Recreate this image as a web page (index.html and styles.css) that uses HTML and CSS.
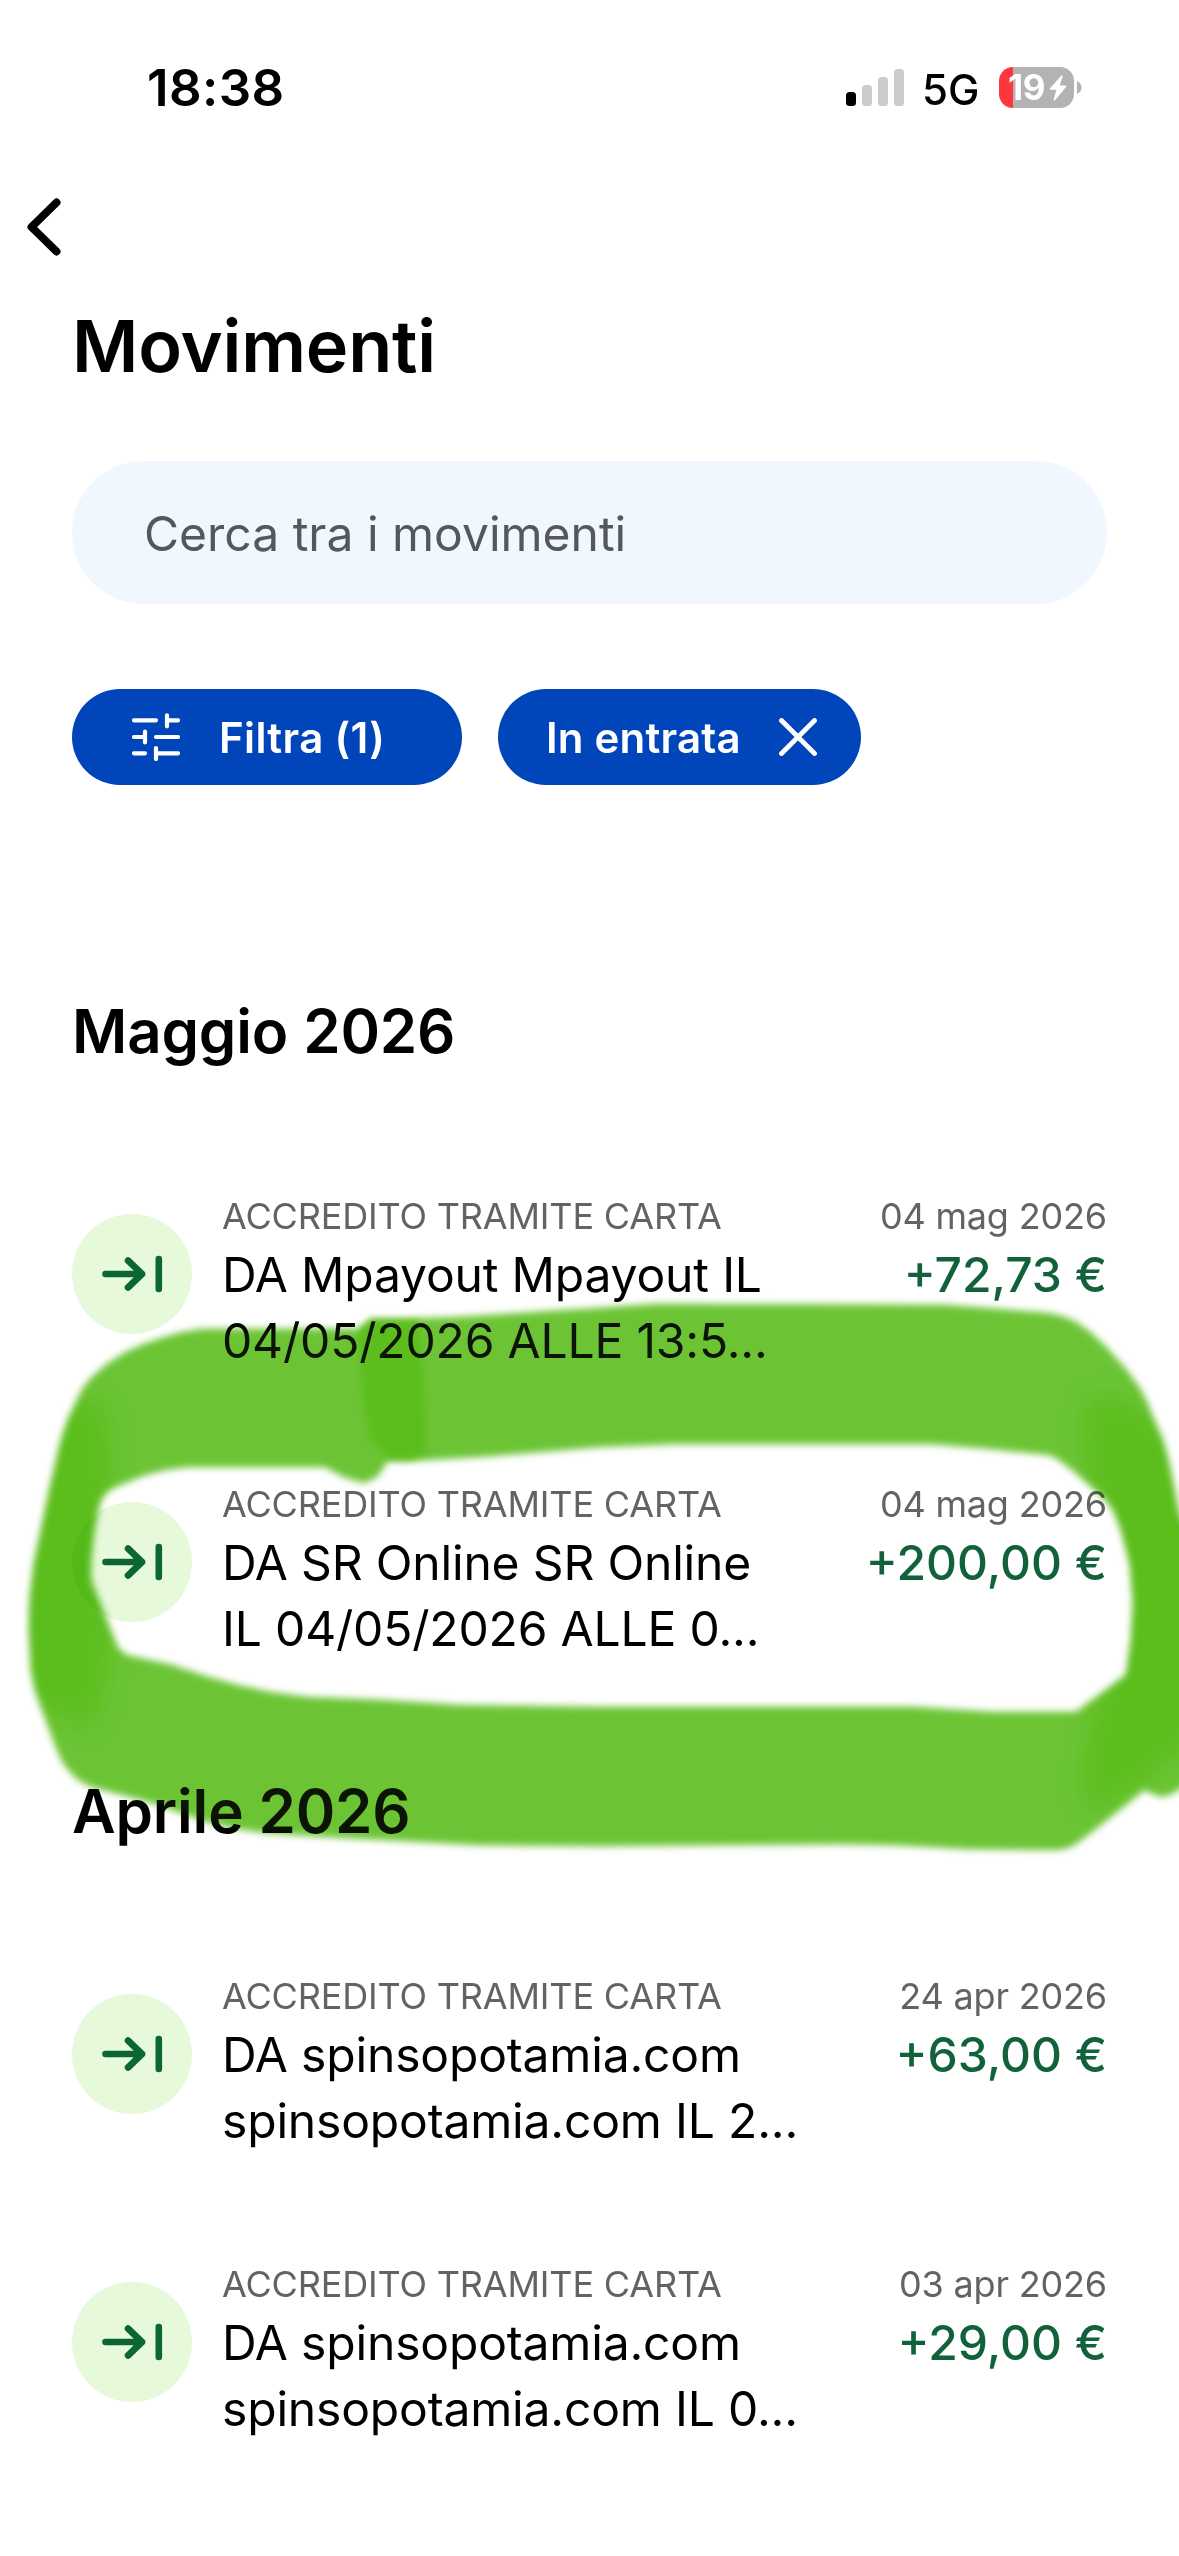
FILE: index.html
```html
<!DOCTYPE html>
<html lang="it">
<head>
<meta charset="utf-8">
<title>Movimenti</title>
<link rel="stylesheet" href="styles.css">
</head>
<body>
<svg class="defs" aria-hidden="true">
  <symbol id="incoming" viewBox="0 0 120 120">
    <path d="M33.5 60H70M56 46.5L70 60L56 73.5M86.8 45V75" fill="none" stroke="#0b6535" stroke-width="6.6" stroke-linecap="round" stroke-linejoin="round"/>
  </symbol>
</svg>
<div class="screen">
  <header class="status">
    <span class="time">18:38</span>
    <div class="status-right">
      <svg class="signal" viewBox="0 0 58 37">
        <rect x="0" y="23" width="10" height="14" rx="3.5" fill="#000"/>
        <rect x="16" y="16" width="10" height="21" rx="3.5" fill="#cbcbcb"/>
        <rect x="32" y="8" width="10" height="29" rx="3.5" fill="#cbcbcb"/>
        <rect x="48" y="0" width="10" height="37" rx="3.5" fill="#cbcbcb"/>
      </svg>
      <span class="network">5G</span>
      <div class="battery">
        <div class="battery-body">
          <span class="battery-level">19</span>
          <svg class="bolt" viewBox="0 0 18 26"><path d="M12.5 0.5L0.8 13.6Q0.3 14.6 1.4 14.7H7.4L4.6 24.6Q4.8 26 6 25.2L17.2 11.8Q17.7 10.7 16.6 10.6H10.8L13.6 1.4Q13.5 0 12.5 0.5Z" fill="#fff"/></svg>
        </div>
        <svg class="battery-cap" viewBox="0 0 5 13"><path d="M0 0Q4.5 2 4.5 6.5Q4.5 11 0 13Z" fill="#b3b3b3"/></svg>
      </div>
    </div>
  </header>
  <nav class="nav">
    <svg class="back" viewBox="0 0 34 58"><path d="M29.5 4.5L4.5 29L29.5 53.5" fill="none" stroke="#000" stroke-width="8" stroke-linecap="round" stroke-linejoin="round"/></svg>
  </nav>
  <main class="content">
    <h1 class="title">Movimenti</h1>
    <div class="search">Cerca tra i movimenti</div>
    <div class="chips">
      <button class="chip chip-filter">
        <svg class="tune" viewBox="0 0 48 48"><path d="M2 7.300H24M35 2.300V13.300M35 7.300H46M2 24H13M13 18.500V29.500M24 24H46M2 40.300H13M24 35V46M24 40.300H46" fill="none" stroke="#fff" stroke-width="4.200" stroke-linecap="round"/></svg>
        <span>Filtra (1)</span>
      </button>
      <button class="chip chip-active">
        <span>In entrata</span>
        <svg class="close" viewBox="0 0 38 38"><path d="M2.500 2.500L35.500 35.500M35.500 2.500L2.500 35.500" fill="none" stroke="#fff" stroke-width="4.800" stroke-linecap="round"/></svg>
      </button>
    </div>

    <h2 class="month">Maggio 2026</h2>
    <div class="list">
      <article class="row">
        <svg class="badge"><use href="#incoming"/></svg>
        <div class="info"><div class="kind">ACCREDITO TRAMITE CARTA</div><div class="desc">DA Mpayout Mpayout IL<br>04/05/2026 ALLE 13:5...</div></div>
        <div class="sum"><div class="date">04 mag 2026</div><div class="amount">+72,73 €</div></div>
      </article>
      <article class="row">
        <svg class="badge"><use href="#incoming"/></svg>
        <div class="info"><div class="kind">ACCREDITO TRAMITE CARTA</div><div class="desc">DA SR Online SR Online<br>IL 04/05/2026 ALLE 0...</div></div>
        <div class="sum"><div class="date">04 mag 2026</div><div class="amount">+200,00 €</div></div>
      </article>
    </div>

    <h2 class="month month-next">Aprile 2026</h2>
    <div class="list">
      <article class="row">
        <svg class="badge"><use href="#incoming"/></svg>
        <div class="info"><div class="kind">ACCREDITO TRAMITE CARTA</div><div class="desc">DA spinsopotamia.com<br>spinsopotamia.com IL 2...</div></div>
        <div class="sum"><div class="date">24 apr 2026</div><div class="amount">+63,00 €</div></div>
      </article>
      <article class="row">
        <svg class="badge"><use href="#incoming"/></svg>
        <div class="info"><div class="kind">ACCREDITO TRAMITE CARTA</div><div class="desc">DA spinsopotamia.com<br>spinsopotamia.com IL 0...</div></div>
        <div class="sum"><div class="date">03 apr 2026</div><div class="amount">+29,00 €</div></div>
      </article>
    </div>
  </main>

  <!-- Highlighter loop drawn over the list -->
  <svg class="marker marker-ink" viewBox="0 1280 1179 600">
    <defs>
      <filter id="edge" x="-5%" y="-5%" width="110%" height="110%"><feGaussianBlur stdDeviation="3.5"/></filter>
      <filter id="soft" x="-60%" y="-30%" width="220%" height="160%"><feGaussianBlur stdDeviation="14"/></filter>
      <path id="loop" clip-rule="evenodd" fill-rule="evenodd" d="M29 1627L31 1670L35 1690L42 1710L57 1750L63 1763L71 1773L80 1781L92 1787L153 1803L207 1822L237 1829L268 1833L329 1837L478 1845L600 1846L840 1844L895 1845L969 1849L1058 1850L1068 1848L1076 1844L1098 1827L1128 1803L1144 1790L1161 1797L1172 1794L1200 1775V1560L1179 1513L1169 1463L1163 1440L1154 1420L1147 1402L1139 1387L1125 1368L1106 1347L1090 1332L1076 1322L1062 1316L1047 1313L947 1305L655 1304L600 1308L459 1317L402 1319L371 1319L358 1329L203 1329L183 1332L165 1337L144 1344L126 1352L107 1364L92 1377L83 1388L77 1400L68 1419L61 1440L50 1487L34 1563L30 1595ZM91 1580L91 1560L93 1540L96 1520L101 1500L107 1492L115 1487L145 1475L165 1470L188 1467L325 1467L344 1477L364 1483L377 1477L388 1461L409 1461L478 1457L600 1447L674 1444L932 1444L980 1448L1050 1455L1062 1462L1076 1473L1106 1500L1114 1512L1121 1530L1130 1565L1133 1603L1131 1640L1126 1675L1076 1712L991 1712L914 1707L600 1707L459 1705L380 1700L306 1697L270 1692L237 1685L205 1676L172 1665L126 1655L118 1648L112 1633L96 1593Z"/>
      <clipPath id="loop-clip"><use href="#loop"/></clipPath>
      <g id="ink">
        <g filter="url(#edge)">
          <use href="#loop" fill="#6cc436"/>
          <g clip-path="url(#loop-clip)">
            <path filter="url(#soft)" fill="#5cbe1d" d="M85 1395L108 1405L112 1500L110 1590L112 1640L102 1700L90 1735L72 1720L-20 1690V1440Z"/>
            <path filter="url(#soft)" fill="#5cbe1d" d="M1085 1395L1130 1400L1240 1480V1700L1165 1765L1130 1790L1092 1812L1082 1800L1092 1710L1110 1675V1590L1084 1460Z"/>
          </g>
        </g>
        <path filter="url(#edge)" fill="#5cbe1d" d="M371 1321L418 1321L424 1380L427 1452L410 1459L388 1458L370 1440L363 1400L358 1335Z"/>
      </g>
    </defs>
    <use href="#ink"/>
  </svg>
  <svg class="marker marker-film" viewBox="0 1280 1179 600"><use href="#ink"/></svg>
</div>
</body>
</html>
```
FILE: styles.css
```css
* { box-sizing: border-box; }

body {
  margin: 0;
  background: #fff;
  color: #000;
  font-family: Inter, "Liberation Sans", sans-serif;
}

h1, h2 { margin: 0; font-weight: 600; }

.defs { display: none; }

.screen {
  position: relative;
  width: 1179px;
  height: 2556px;
  overflow: hidden;
}

.status {
  display: flex;
  justify-content: space-between;
  height: 176px;
  padding: 58px 97px 0 147px;
}

.time { font-size: 51px; line-height: 60px; font-weight: 600; letter-spacing: 0.4px; }

.status-right { display: flex; height: 60px; }

.signal { width: 58px; height: 37px; margin-top: 11px; }

.network {
  margin-left: 18px;
  width: 56px;
  font-size: 42px;
  line-height: 63px;
  font-weight: 500;
}

.battery { display: flex; align-items: center; height: 41px; margin: 9px 0 0 21px; gap: 3px; }

.battery-body {
  display: flex;
  align-items: center;
  gap: 2px;
  width: 75px;
  height: 41px;
  padding-left: 9px;
  border-radius: 14px;
  background: linear-gradient(90deg, #ff373c 14px, #b3b3b3 14px);
}

.battery-level { width: 39px; color: #fff; font-size: 35px; line-height: 41px; font-weight: 700; letter-spacing: -0.3px; }

.bolt { width: 18px; height: 26px; flex: none; }

.battery-cap { width: 5px; height: 13px; }

.nav { height: 122px; padding: 22px 0 0 27px; }

.back { display: block; width: 34px; height: 58px; }

.content { padding: 0 72px; }

.title { font-size: 72px; line-height: 96px; letter-spacing: -0.2px; }

.search {
  height: 143px;
  margin-top: 67px;
  padding: 0 72px;
  border-radius: 72px;
  background: #f0f7ff;
  color: #54575e;
  font-size: 48px;
  line-height: 145px;
}

.chips { display: flex; gap: 36px; margin-top: 85px; }

.chip {
  display: flex;
  align-items: center;
  height: 96px;
  border: 0;
  border-radius: 48px;
  background: #0045b9;
  color: #fff;
  font: 600 42px/96px Inter, "Liberation Sans", sans-serif;
  letter-spacing: 0.2px;
  white-space: nowrap;
}

.chip span { padding-top: 1px; }

.chip-filter { width: 390px; padding: 0 0 0 60px; gap: 39px; letter-spacing: 0.35px; }
.chip-active { width: 363px; padding: 0 44px 0 48px; justify-content: space-between; }

.tune { width: 48px; height: 48px; }
.close { width: 38px; height: 38px; }

.month { margin-top: 210px; font-size: 60px; line-height: 72px; letter-spacing: -0.15px; }
.month-next { margin-top: 9px; }

.list { padding-top: 123px; }

.row { display: flex; height: 288px; }

.badge {
  width: 120px;
  height: 120px;
  margin-top: 24px;
  border-radius: 50%;
  background: #e6f9da;
}

.info { flex: 1; margin-left: 30px; white-space: nowrap; }

.sum { text-align: right; white-space: nowrap; }

.kind, .date { color: #636363; font-size: 36px; line-height: 52px; letter-spacing: -0.17px; }

.desc, .amount { font-size: 48px; line-height: 66px; }

.desc { letter-spacing: -0.17px; }

.amount { color: #11623a; font-weight: 500; }

.marker {
  position: absolute;
  left: 0;
  top: 1280px;
  width: 1179px;
  height: 600px;
  pointer-events: none;
}

.marker-ink { mix-blend-mode: multiply; }
.marker-film { opacity: 0.1; }
```
